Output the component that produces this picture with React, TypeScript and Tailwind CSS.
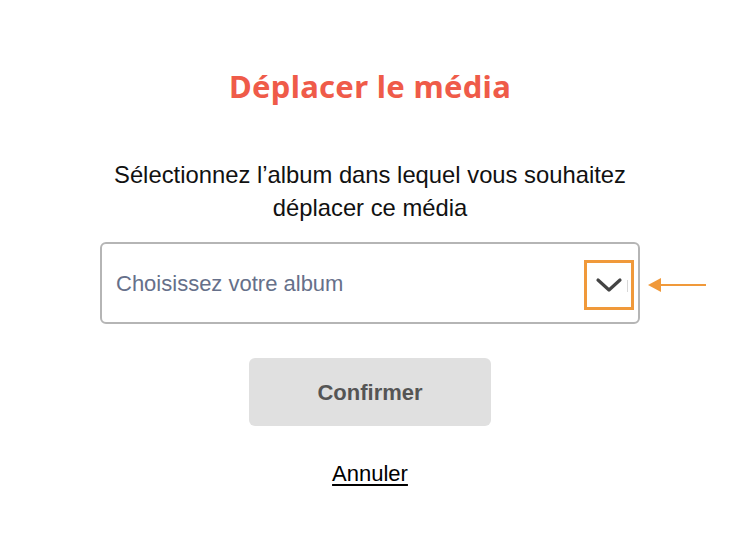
import React from "react";

function Chevron() {
  return (
    <svg width="28" height="16" viewBox="0 0 28 16" fill="none">
      <path d="M3 3l11 10 11-10" stroke="#444" strokeWidth="3.2" strokeLinecap="round" strokeLinejoin="round" />
    </svg>
  );
}

export default function App() {
  return (
    <div className="w-[734px] h-[552px] bg-white flex flex-col items-center pl-[6px]" style={{ fontFamily: '"Liberation Sans", Arial, sans-serif' }}>
      <h1
        className="mt-[66px] text-[31px] leading-[40px] font-bold text-[#ef5b49] tracking-[0.3px]"
        style={{ fontFamily: '"Noto Sans", Inter, sans-serif' }}
      >
        Déplacer le média
      </h1>
      <p className="mt-[52px] text-[23.8px] leading-[33px] text-[#111] text-center">
        Sélectionnez l’album dans lequel vous souhaitez
        <br />
        déplacer ce média
      </p>
      <div className="relative mt-[18px] w-[540px] h-[82px] border-2 border-[#b5b5b5] rounded-[6px] flex items-center pl-[14px] pr-[4px]">
        <span className="flex-1 text-[22px] text-[#66708a]">Choisissez votre album</span>
        <div className="relative mt-[4px] w-[50px] h-[50px] border-[3px] border-[#f0993a] flex items-center justify-center">
          <Chevron />
          <span className="absolute right-[3px] top-[17px] w-px h-[12px] bg-[#d8d8d8]" />
        </div>
        <div className="absolute left-[546px] top-1/2 -translate-y-1/2 mt-[2px] flex items-center">
          <svg width="58" height="16" viewBox="0 0 58 16">
            <path d="M0 8l13-7v14z" fill="#f0993a" />
            <path d="M12 8h46" stroke="#f0993a" strokeWidth="2" />
          </svg>
        </div>
      </div>
      <button className="mt-[34px] w-[242px] h-[68px] rounded-[6px] bg-[#e0e0e0] text-[22px] font-bold text-[#555]">
        Confirmer
      </button>
      <a className="mt-[31px] text-[22px] text-black underline underline-offset-[3px]">Annuler</a>
    </div>
  );
}
